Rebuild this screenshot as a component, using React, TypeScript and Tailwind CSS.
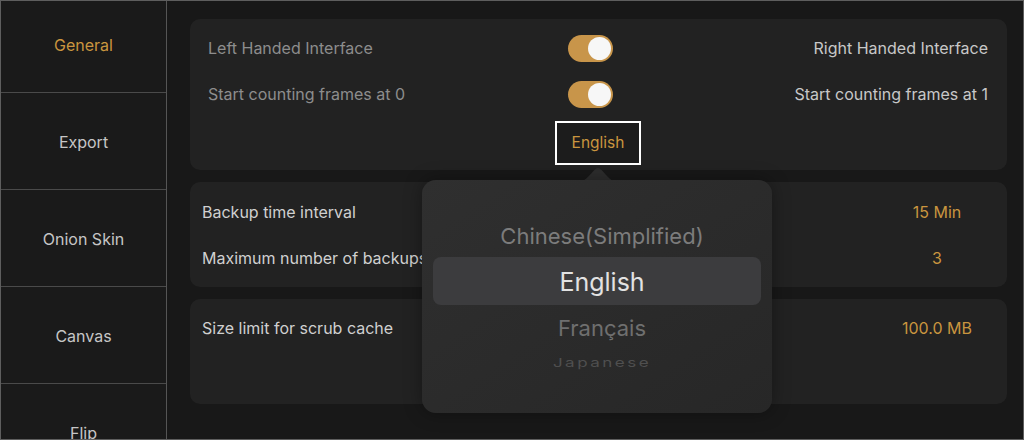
import React from "react";

const NAV = ["General", "Export", "Onion Skin", "Canvas", "Flip"];

function Toggle() {
  return (
    <div className="flex h-[27px] w-[45px] items-center justify-end rounded-full bg-[#c8954a] pr-[2px]">
      <div className="h-[23px] w-[23px] rounded-full bg-[#f7f7f7]" />
    </div>
  );
}

function ValueRow({ label, value }: { label: string; value: string }) {
  return (
    <div className="flex h-[46px] items-center">
      <span className="flex-1 text-[16px] text-[#d0d0d0]">{label}</span>
      <span className="w-[100px] text-center text-[16px] text-[#c9953f]">{value}</span>
    </div>
  );
}

export default function App() {
  return (
    <div
      className="flex h-[440px] w-[1024px] overflow-hidden border border-[#5e5e5e] bg-[#181818]"
      style={{ fontFamily: "Inter, 'Noto Sans', sans-serif" }}
    >
      {/* sidebar */}
      <div className="flex w-[166px] shrink-0 flex-col border-r border-[#555] bg-[#1a1a1a]">
        {NAV.map((name, i) => (
          <div
            key={name}
            className={`flex shrink-0 items-center justify-center border-b border-[#4a4a4a] text-[16px] ${
              i === 0 ? "h-[92px] pb-[3px] text-[#c9953f]" : "h-[97px] pt-[2px] text-[#c6c6c6]"
            }`}
          >
            {name}
          </div>
        ))}
      </div>

      {/* main */}
      <div className="relative flex flex-1 flex-col gap-[12px] pl-[23px] pr-[16px] pt-[18px]">
        <div className="h-[151px] rounded-[10px] bg-[#222] pl-[18px] pr-[19px] pt-[6px]">
          <div className="grid h-[46px] grid-cols-[360px_45px_1fr] items-center">
            <span className="text-[16px] text-[#8d8d8d]">Left Handed Interface</span>
            <Toggle />
            <span className="text-right text-[16px] text-[#c8c8c8]">Right Handed Interface</span>
          </div>
          <div className="grid h-[46px] grid-cols-[360px_45px_1fr] items-center">
            <span className="text-[16px] text-[#8d8d8d]">Start counting frames at 0</span>
            <Toggle />
            <span className="text-right text-[16px] text-[#c8c8c8]">Start counting frames at 1</span>
          </div>
          <div className="mt-[4px] flex justify-center">
            <div className="flex h-[44px] w-[86px] items-center justify-center border-2 border-white bg-[#1c1c1c] text-[15.5px] text-[#c9953f]">
              English
            </div>
          </div>
        </div>

        <div className="h-[105px] rounded-[10px] bg-[#222] pl-[12px] pr-[20px] pt-[7px]">
          <ValueRow label="Backup time interval" value="15 Min" />
          <ValueRow label="Maximum number of backups" value="3" />
        </div>

        <div className="h-[105px] rounded-[10px] bg-[#222] pl-[12px] pr-[20px] pt-[6px]">
          <ValueRow label="Size limit for scrub cache" value="100.0 MB" />
        </div>

        {/* language picker popover */}
        <svg
          className="absolute left-[411px] top-[165px]"
          width="40"
          height="16"
          viewBox="0 0 40 16"
        >
          <path d="M0 16 C10 16 15 2 20 2 C25 2 30 16 40 16 Z" fill="#2d2d2d" />
        </svg>
        <div className="absolute left-[255px] top-[179px] flex h-[233px] w-[350px] flex-col rounded-[14px] bg-gradient-to-br from-[#2f2f2f] to-[#272727] pt-[40px] shadow-[0_0_18px_rgba(0,0,0,0.35)]">
          <div className="flex h-[32px] items-center justify-center pl-[10px] text-[22px] text-[#7c7c7c]">
            Chinese(Simplified)
          </div>
          <div className="mx-[11px] mt-[5px] flex h-[48px] items-center justify-center rounded-[8px] bg-[#3c3c3e] pl-[10px] pt-[3px] text-[25px] text-[#e2e2e2]">
            English
          </div>
          <div className="flex h-[46px] items-center justify-center pl-[10px] text-[22px] text-[#6f6f6f]">
            Français
          </div>
          <div className="flex h-[22px] items-center justify-center pl-[10px] pt-[3px]">
            <span className="inline-block scale-y-[0.7] text-[17px] tracking-[2.5px] text-[#4f4f4f]">
              Japanese
            </span>
          </div>
        </div>
      </div>
    </div>
  );
}
